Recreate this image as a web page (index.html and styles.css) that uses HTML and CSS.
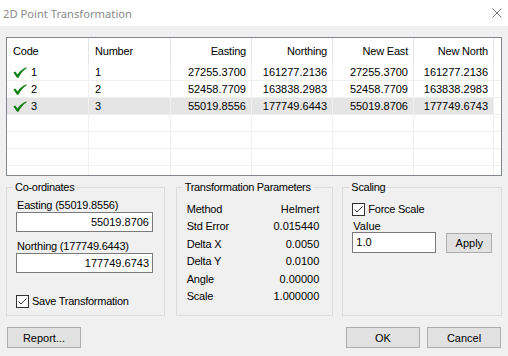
FILE: index.html
```html
<!DOCTYPE html>
<html>
<head>
<meta charset="utf-8">
<link rel="stylesheet" href="styles.css">
</head>
<body>
<div class="titlebar">
  <span class="title">2D Point Transformation</span>
  <svg class="close" width="10" height="10" viewBox="0 0 10 10"><path d="M0.5 0.5 L9.5 9.5 M9.5 0.5 L0.5 9.5" stroke="#777" stroke-width="1" fill="none"/></svg>
</div>
<div class="content">
  <div class="list">
    <div class="row head">
      <div class="cell">Code</div>
      <div class="cell">Number</div>
      <div class="cell r">Easting</div>
      <div class="cell r">Northing</div>
      <div class="cell r">New East</div>
      <div class="cell r">New North</div>
      <div class="cell fill"></div>
    </div>
    <div class="row">
      <div class="cell code"><svg class="tick" width="14" height="11" viewBox="0 0 14 11"><path d="M0.4 5.6 L2.2 4.6 L4.6 7.4 C6.8 4.2 9.6 1.7 13.6 0.3 L13.7 1.3 C10.2 3.3 7.6 6.5 5.5 10.7 L4 10.7 Z" fill="#107e10"/></svg>1</div>
      <div class="cell">1</div>
      <div class="cell r">27255.3700</div>
      <div class="cell r">161277.2136</div>
      <div class="cell r">27255.3700</div>
      <div class="cell r">161277.2136</div>
      <div class="cell fill"></div>
    </div>
    <div class="row">
      <div class="cell code"><svg class="tick" width="14" height="11" viewBox="0 0 14 11"><path d="M0.4 5.6 L2.2 4.6 L4.6 7.4 C6.8 4.2 9.6 1.7 13.6 0.3 L13.7 1.3 C10.2 3.3 7.6 6.5 5.5 10.7 L4 10.7 Z" fill="#107e10"/></svg>2</div>
      <div class="cell">2</div>
      <div class="cell r">52458.7709</div>
      <div class="cell r">163838.2983</div>
      <div class="cell r">52458.7709</div>
      <div class="cell r">163838.2983</div>
      <div class="cell fill"></div>
    </div>
    <div class="row sel">
      <div class="cell code"><svg class="tick" width="14" height="11" viewBox="0 0 14 11"><path d="M0.4 5.6 L2.2 4.6 L4.6 7.4 C6.8 4.2 9.6 1.7 13.6 0.3 L13.7 1.3 C10.2 3.3 7.6 6.5 5.5 10.7 L4 10.7 Z" fill="#107e10"/></svg>3</div>
      <div class="cell">3</div>
      <div class="cell r">55019.8556</div>
      <div class="cell r">177749.6443</div>
      <div class="cell r">55019.8706</div>
      <div class="cell r">177749.6743</div>
      <div class="cell fill"></div>
    </div>
    <div class="row"><div class="cell"></div><div class="cell"></div><div class="cell"></div><div class="cell"></div><div class="cell"></div><div class="cell"></div><div class="cell fill"></div></div>
    <div class="row"><div class="cell"></div><div class="cell"></div><div class="cell"></div><div class="cell"></div><div class="cell"></div><div class="cell"></div><div class="cell fill"></div></div>
    <div class="row"><div class="cell"></div><div class="cell"></div><div class="cell"></div><div class="cell"></div><div class="cell"></div><div class="cell"></div><div class="cell fill"></div></div>
    <div class="row"><div class="cell"></div><div class="cell"></div><div class="cell"></div><div class="cell"></div><div class="cell"></div><div class="cell"></div><div class="cell fill"></div></div>
  </div>

  <div class="groups">
    <fieldset class="group coords">
      <legend>Co-ordinates</legend>
      <div class="gbody">
        <div class="flabel">Easting (55019.8556)</div>
        <div class="tbox r">55019.8706</div>
        <div class="flabel second">Northing (177749.6443)</div>
        <div class="tbox r">177749.6743</div>
        <label class="check save"><span class="box"><svg width="11" height="11" viewBox="0 0 11 11"><path d="M1.5 5.5 L4 8 L9.5 2.5" stroke="#333" stroke-width="1" fill="none"/></svg></span>Save Transformation</label>
      </div>
    </fieldset>
    <fieldset class="group params">
      <legend>Transformation Parameters</legend>
      <div class="gbody">
        <div class="prow"><span class="pl">Method</span><span>Helmert</span></div>
        <div class="prow"><span class="pl">Std Error</span><span>0.015440</span></div>
        <div class="prow"><span class="pl">Delta X</span><span>0.0050</span></div>
        <div class="prow"><span class="pl">Delta Y</span><span>0.0100</span></div>
        <div class="prow"><span class="pl">Angle</span><span>0.00000</span></div>
        <div class="prow"><span class="pl">Scale</span><span>1.000000</span></div>
      </div>
    </fieldset>
    <fieldset class="group scaling">
      <legend>Scaling</legend>
      <div class="gbody">
        <label class="check force"><span class="box"><svg width="11" height="11" viewBox="0 0 11 11"><path d="M1.5 5.5 L4 8 L9.5 2.5" stroke="#333" stroke-width="1" fill="none"/></svg></span>Force Scale</label>
        <div class="vlabel">Value</div>
        <div class="vrow">
          <div class="tbox value">1.0</div>
          <button class="btn apply">Apply</button>
        </div>
      </div>
    </fieldset>
  </div>

  <div class="footer">
    <button class="btn">Report...</button>
    <div class="spacer"></div>
    <button class="btn">OK</button>
    <button class="btn">Cancel</button>
  </div>
</div>
</body>
</html>
```
FILE: styles.css
```css
* { box-sizing: border-box; }
html, body { margin: 0; padding: 0; }
body {
  width: 508px;
  height: 356px;
  overflow: hidden;
  background: #f0f0f0;
  font-family: "Liberation Sans", Arial, sans-serif;
  font-size: 11px;
  line-height: 13px;
  color: #000;
}
.titlebar {
  height: 26px;
  background: #fff;
  display: flex;
  align-items: center;
  justify-content: space-between;
  padding: 0 6px 0 3px;
}
.title {
  font-family: "Noto Sans", sans-serif;
  font-size: 11.2px;
  color: #8a8a8a;
}
.close { display: block; }
.content { padding: 11px 6px 0 6px; }
.list {
  height: 139px;
  border: 1px solid #828790;
  background: #fff;
  overflow: hidden;
}
.row {
  display: grid;
  grid-template-columns: 82px 82px 81px 81px 81px 80px 1fr;
  height: 17px;
}
.row.head { height: 26px; }
.cell {
  border-right: 1px solid #f0f0f0;
  border-bottom: 1px solid #f0f0f0;
  padding: 0 5px 0 6px;
  line-height: 17px;
  white-space: nowrap;
  overflow: hidden;
}
.head .cell {
  border-bottom: none;
  border-right-color: #e5e5e5;
  line-height: 26px;
  letter-spacing: -0.2px;
}
.cell.r { text-align: right; }
.cell.fill { border-right: none; }
.sel .cell { background: #e5e5e5; }
.sel .cell.fill { background: #fff; }
.cell.code { display: flex; align-items: center; gap: 4px; }
.tick { display: block; flex: none; }

.groups {
  display: flex;
  margin-top: 5px;
  gap: 10px;
}
.group {
  margin: 0;
  padding: 0;
  border: 1px solid #dcdcdc;
  height: 135px;
  min-width: 0;
}
.group legend {
  padding: 0 2px;
  margin-left: 6px;
  line-height: 13px;
  white-space: nowrap;
  letter-spacing: -0.3px;
}
.coords { width: 159px; }
.params { width: 158px; margin-left: 1px; }
.scaling { width: 160px; margin-left: -1px; }
.coords .gbody { padding-left: 9px; }
.params .gbody { padding: 7px 13px 0 10px; }
.scaling .gbody { padding-left: 9px; }

.flabel { margin-top: 5px; padding-left: 1px; letter-spacing: -0.2px; }
.flabel.second { margin-top: 8px; }
.tbox {
  width: 137px;
  height: 20px;
  border: 1px solid #7a7a7a;
  background: #fff;
  line-height: 18px;
  padding: 0 3px;
}
.tbox.r { text-align: right; }

.check {
  display: flex;
  align-items: center;
  gap: 3px;
  letter-spacing: -0.25px;
}
.check .box {
  width: 13px;
  height: 13px;
  border: 1px solid #333;
  background: #fff;
  display: flex;
  align-items: center;
  justify-content: center;
  flex: none;
}
.check .box svg { display: block; }
.save { margin-top: 22px; }
.force { margin-top: 9px; }

.prow {
  display: flex;
  justify-content: space-between;
  height: 17.4px;
  line-height: 17px;
}
.pl { letter-spacing: -0.2px; }

.vlabel { margin-top: 4px; padding-left: 1px; }
.vrow { display: flex; align-items: flex-start; gap: 10px; margin-top: -1px; }
.tbox.value { width: 84px; height: 21px; line-height: 18px; }
.btn {
  font-family: "Liberation Sans", Arial, sans-serif;
  font-size: 11px;
  color: #000;
  background: #e1e1e1;
  border: 1px solid #adadad;
  height: 21px;
  width: 74px;
  padding: 0;
  margin: 0;
}
.btn.apply { width: 46px; height: 20px; margin-top: 1px; }

.footer {
  display: flex;
  gap: 7px;
  margin-top: 11px;
  padding: 0 1px;
}
.spacer { flex: 1; }
```
